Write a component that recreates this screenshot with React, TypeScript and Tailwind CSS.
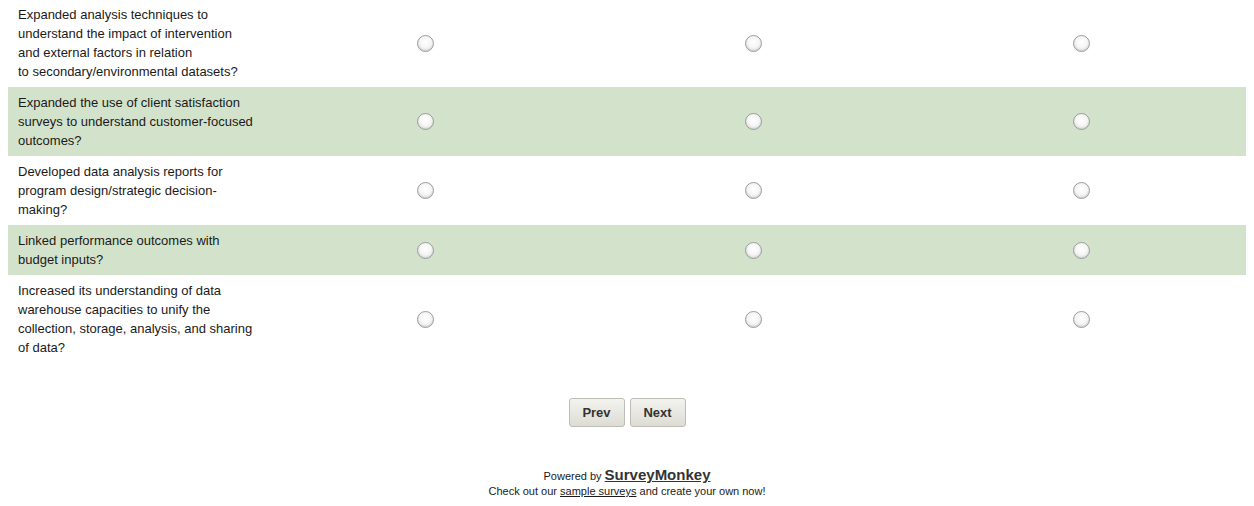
import React from 'react';

const rows: { lines: string[]; shaded: boolean }[] = [
  {
    lines: [
      'Expanded analysis techniques to',
      'understand the impact of intervention',
      'and external factors in relation',
      'to secondary/environmental datasets?',
    ],
    shaded: false,
  },
  {
    lines: ['Expanded the use of client satisfaction', 'surveys to understand customer-focused', 'outcomes?'],
    shaded: true,
  },
  {
    lines: ['Developed data analysis reports for', 'program design/strategic decision-', 'making?'],
    shaded: false,
  },
  {
    lines: ['Linked performance outcomes with', 'budget inputs?'],
    shaded: true,
  },
  {
    lines: [
      'Increased its understanding of data',
      'warehouse capacities to unify the',
      'collection, storage, analysis, and sharing',
      'of data?',
    ],
    shaded: false,
  },
];

const Radio = () => (
  <span className="block w-[17px] h-[17px] rounded-full border border-[#9c9c9c] bg-[radial-gradient(circle_at_50%_40%,#ffffff_0%,#f6f6f6_45%,#d4d4d4_100%)] shadow-[inset_0_-1px_1px_rgba(0,0,0,0.08)]" />
);

const App = () => {
  return (
    <div className="w-[1254px] h-[506px] bg-white overflow-hidden font-['Liberation_Sans',Arial,sans-serif] text-[#1a1a1a]">
      {/* matrix question */}
      <div className="mx-2">
        {rows.map((row, i) => (
          <div
            key={i}
            className={`grid grid-cols-[253px_1fr_1fr_1fr] items-center ${row.shaded ? 'bg-[#d3e3cb]' : ''} ${i === 0 ? 'pt-[5px] pb-[6px]' : 'py-[6px]'}`}
          >
            <div className="pl-[10px] text-[13px] leading-[19px] whitespace-nowrap">
              {row.lines.map((l, j) => (
                <div key={j}>{l}</div>
              ))}
            </div>
            <div className="flex justify-center"><Radio /></div>
            <div className="flex justify-center"><Radio /></div>
            <div className="flex justify-center"><Radio /></div>
          </div>
        ))}
      </div>

      {/* navigation */}
      <div className="flex justify-center gap-[5px] mt-[35px]">
        <button className="w-[56px] h-[29px] rounded-[3px] border border-[#bdbdb5] bg-[linear-gradient(#f3f3ef,#dddcd4)] text-[13px] font-bold text-[#333]">
          Prev
        </button>
        <button className="w-[56px] h-[29px] rounded-[3px] border border-[#bdbdb5] bg-[linear-gradient(#f3f3ef,#dddcd4)] text-[13px] font-bold text-[#333]">
          Next
        </button>
      </div>

      {/* footer */}
      <div className="mt-[40px] flex flex-col items-center text-[11px] text-[#1a1a1a]">
        <div className="flex items-baseline gap-[3px] leading-[15px]">
          <span>Powered by</span>
          <span className="text-[15px] font-bold underline text-[#333]">SurveyMonkey</span>
        </div>
        <div className="leading-[15px]">
          Check out our <span className="underline">sample surveys</span> and create your own now!
        </div>
      </div>
    </div>
  );
};

export default App;
